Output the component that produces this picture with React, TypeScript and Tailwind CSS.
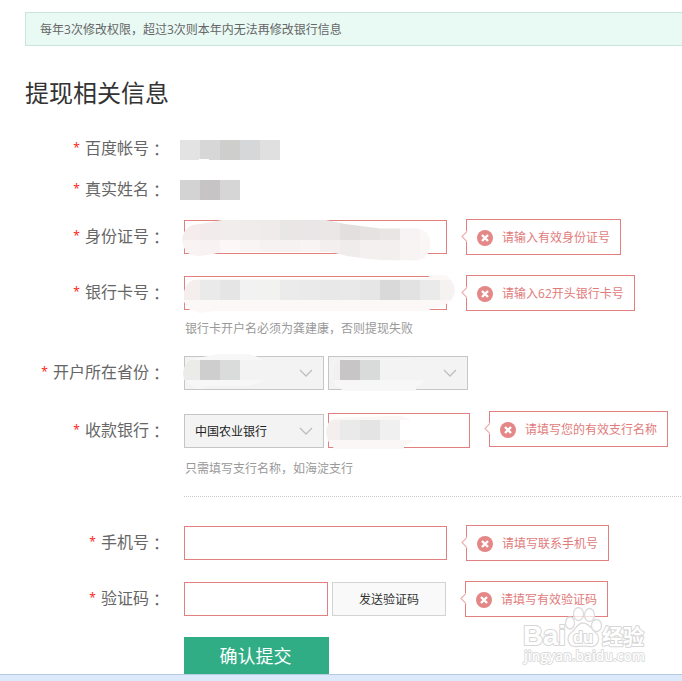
import type { ReactNode } from 'react';

type Cell = [x: number, y: number, w: number, h: number, fill: string];

const BOX = 'relative h-[34px] border box-border shrink-0';

function Cells({ cells }: { cells: Cell[] }) {
  return (
    <>
      {cells.map(([x, y, w, h, fill]) => (
        <rect key={`${x}-${y}`} x={x} y={y} width={w} height={h} fill={fill} />
      ))}
    </>
  );
}

function row(x: number, y: number, h: number, fills: string[]): Cell[] {
  return fills.map((fill, i) => [x + i * 20, y, 20, h, fill]);
}

function Label({ children }: { children: string }) {
  return (
    <div className="flex h-[32px] w-[165px] shrink-0 items-center justify-end text-[16px] leading-[32px] text-[#666]">
      <span className="mr-[5px] pt-[2px] font-['Noto_Sans'] text-[12px] text-[#ff2a20]">*</span>
      <span>{children}</span>
      <span className="w-[16px] pt-[4px] text-center font-['Noto_Sans_CJK_TC']" lang="zh-TW">：</span>
    </div>
  );
}

function Row({ label, className, children }: { label: string; className: string; children: ReactNode }) {
  return (
    <div className={`flex h-[36px] ${className}`}>
      <Label>{label}</Label>
      {children}
    </div>
  );
}

function Tip({ children, className }: { children: ReactNode; className: string }) {
  return (
    <div className={`relative flex h-[36px] shrink-0 items-center border border-[#e27f7f] pl-[10px] pr-[10px] text-[12px] text-[#e17b7b] ${className}`}>
      <svg className="absolute -left-[6px] top-[9px]" width="7" height="14" viewBox="0 0 7 14">
        <path d="M5 2h1v11h-1z" fill="#fff" />
        <path d="M6 2.3 1 7.5l5 5.2" fill="none" stroke="#eeb0b0" strokeWidth="1.2" />
      </svg>
      <svg className="mr-[9px] mt-[2px]" width="16" height="16" viewBox="0 0 16 16">
        <circle cx="8" cy="8" r="8" fill="#e48787" />
        <path d="m5 5 6 6m0-6-6 6" stroke="#fff" strokeWidth="2.4" />
      </svg>
      <span className="whitespace-nowrap">{children}</span>
    </div>
  );
}

function Chevron() {
  return (
    <svg className="absolute right-[9px] top-[11px]" width="16" height="10" viewBox="0 0 16 10">
      <path d="m2 2 6 6 6-6" fill="none" stroke="#bdbdbd" strokeWidth="1.3" />
    </svg>
  );
}

export default function App() {
  return (
    <div className="relative flex h-[681px] w-[682px] flex-col overflow-hidden bg-white font-['Noto_Sans_CJK_SC',sans-serif]">
      <div className="ml-[25px] mt-[12px] flex h-[34px] shrink-0 items-center border border-r-0 border-[#c9e6dc] bg-[#e9faf5] pl-[14px] text-[12px] text-[#666]">
        <span>
          每年<span className="font-['Open_Sans']">3</span>次修改权限，超过<span className="font-['Open_Sans']">3</span>次则本年内无法再修改银行信息
        </span>
      </div>
      <h1 className="ml-[25px] mt-[28px] h-[37px] text-[24px] font-normal leading-[36px] text-[#333]">提现相关信息</h1>

      <Row label="百度帐号" className="mt-[20px]">
        <svg className="ml-[15px] mt-[9px]" width="100" height="20">
          <Cells cells={row(0, 0, 20, ['#e3e3e3', '#d7d7d7', '#cececc', '#d6d7d9', '#e0e0e1'])} />
          <path d="M19 20v-1h10v1z" fill="#fff" />
        </svg>
      </Row>
      <Row label="真实姓名" className="mt-[5px]">
        <svg className="ml-[15px] mt-[8px]" width="60" height="20">
          <Cells cells={row(0, 0, 20, ['#d3d3d3', '#c6c4c4', '#d6d6d6'])} />
        </svg>
      </Row>

      <Row label="身份证号" className="mt-[11px]">
        <div className={`${BOX} ml-[19px] mt-px w-[263px] border-[#e27f7f]`}>
          <svg className="absolute -left-[5px] -top-[6px]" width="280" height="50" viewBox="180 215 280 50">
            <clipPath id="smudge-id">
              <path d="M182 240Q183 229 192 225L206 223 222 220H326L345 224 361 226 380 228.500H418Q429 230 430.500 242 430 258 418 260.500L380 260 361 258 347 256 331 252H222L213 254 200 256Q184 257 182 240Z" />
            </clipPath>
            <g clipPath="url(#smudge-id)">
              <Cells cells={row(180, 220, 20, ['#f5eded', '#f1eceb', '#f0edec', '#f0eceb', '#efebea', '#e9e6e6', '#eae6e8', '#ebe7e6', '#e2dfde', '#e5e2e1', '#e9e5e4', '#f7f2f4', '#fbf7f6'])} />
              <Cells cells={row(180, 240, 22, ['#f9f3f3', '#f8f3f2', '#fdf8f7', '#f9f5f4', '#f6f2f2', '#f6f2f1', '#f9f4f4', '#f3efee', '#f0eceb', '#f4f0ef', '#f3efee', '#f9f4f4', '#fbf6f6'])} />
            </g>
          </svg>
        </div>
        <Tip className="ml-[19px]">请输入有效身份证号</Tip>
      </Row>

      <Row label="银行卡号" className="mt-[20px]">
        <div className={`${BOX} ml-[19px] mt-px w-[263px] border-[#e27f7f]`}>
          <svg className="absolute -left-[5px] -top-[6px]" width="280" height="50" viewBox="180 271 280 50">
            <clipPath id="smudge-card">
              <path d="M184 293Q186 280 198 279H424L432 275H445Q453 279 455 291 453 303 441 306L425 311H215L200 313 190 310 184 302Z" />
            </clipPath>
            <g clipPath="url(#smudge-card)">
              <rect x="180" y="271" width="280" height="50" fill="#fcf8f7" />
              <Cells cells={row(180, 280, 20, ['#f4eeee', '#eaeaea', '#e5e5e5', '#f2f2f2', '#f2f3f1', '#ebebeb', '#eaeaea', '#e8e8e8', '#e9e9e9', '#e6e6e6', '#d9d9d9', '#e3e2e2', '#eaeaea', '#f6f2f2'])} />
            </g>
          </svg>
        </div>
        <Tip className="ml-[19px]">
          请输入<span className="font-['Open_Sans']">62</span>开头银行卡号
        </Tip>
      </Row>
      <p className="ml-[185px] mt-[7px] h-[20px] text-[12px] leading-[20px] text-[#999]">银行卡开户名必须为龚建康，否则提现失败</p>

      <Row label="开户所在省份" className="mt-[17px]">
        <div className={`${BOX} ml-[19px] mt-px w-[140px] border-[#c6c6c6] bg-[#f3f3f3]`}>
          <svg className="absolute -left-[5px] -top-[4px]" width="90" height="38" viewBox="180 353 90 38">
            <path d="M183 374Q184 361 198 358L218 354H248Q260 357 263 360V380Q256 386 242 386H204V389H196V387Q186 384 183 374Z" fill="#f7f7f7" />
            <path d="M183 374Q184 363 190 360H200V380H184Z" fill="#ebebea" />
            <Cells cells={[[200, 360, 20, 20, '#cecece'], [220, 360, 20, 20, '#dadcdb'], [240, 360, 24, 20, '#f3f3f3']]} />
          </svg>
          <Chevron />
        </div>
        <div className={`${BOX} ml-[4px] mt-px w-[140px] border-[#c6c6c6] bg-[#f3f3f3]`}>
          <svg className="absolute left-0 top-0" width="110" height="34" viewBox="329 357 110 34">
            <path d="M332 374Q334 361 344 359H410Q414 361 412 380H425Q421 385 416 387V391H345Q332 386 332 374Z" fill="#f7f7f7" />
            <path d="M332 374Q334 362 340 360V380H333Z" fill="#f1f1f0" />
            <Cells cells={[[340, 360, 20, 20, '#c8c5c6'], [360, 360, 20, 20, '#d8dbda'], [380, 360, 34, 20, '#f3f3f3']]} />
          </svg>
          <Chevron />
        </div>
      </Row>

      <Row label="收款银行" className="mt-[22px]">
        <div className={`${BOX} ml-[19px] mt-px w-[140px] border-[#c6c6c6] bg-[#f3f3f3] pl-[10px] text-[12px] leading-[31px] text-[#222]`}>
          中国农业银行
          <Chevron />
        </div>
        <div className="relative ml-[4px] h-[35px] w-[142px] shrink-0 border border-[#e27f7f]">
          <svg className="absolute -left-[4px] top-0" width="95" height="36" viewBox="325 414 95 36">
            <path d="M326 433Q326 421 335 418L390 416H402L411 420H400V440H413Q408 445 404 446V449H335Q327 443 326 433Z" fill="#fbf7f6" />
            <path d="M326 433Q327 422 334 420H340V440H328Z" fill="#f4eeee" />
            <Cells cells={row(340, 420, 20, ['#eaeaea', '#e4e4e4', '#f0f0f0'])} />
          </svg>
        </div>
        <Tip className="-mt-[2px] ml-[19px]">请填写您的有效支行名称</Tip>
      </Row>
      <p className="ml-[185px] mt-[9px] h-[20px] text-[12px] leading-[20px] text-[#999]">只需填写支行名称，如海淀支行</p>
      <div className="ml-[184px] mt-[18px] h-px shrink-0 bg-[repeating-linear-gradient(90deg,#ccc_0_1px,transparent_1px_2px)]" />

      <Row label="手机号" className="mt-[28px]">
        <div className={`${BOX} ml-[19px] mt-px w-[263px] border-[#e27f7f]`} />
        <Tip className="ml-[19px]">请填写联系手机号</Tip>
      </Row>
      <Row label="验证码" className="mt-[20px]">
        <div className={`${BOX} ml-[19px] mt-px w-[144px] border-[#e27f7f]`} />
        <button className={`${BOX} ml-[4px] mt-px w-[114px] border-[#d3d3d3] bg-[#f9f9f9] text-[12px] text-[#333]`}>发送验证码</button>
        <Tip className="ml-[19px]">请填写有效验证码</Tip>
      </Row>
      <button className="ml-[184px] mt-[20px] h-[37px] w-[145px] shrink-0 bg-[#30ad85] pr-[2px] text-[18px] leading-[37px] text-white">确认提交</button>
      <div className="h-[7px] shrink-0 border-t border-[#b5cbe3] bg-[#dbe9fa]" />

      <svg className="absolute left-[518px] top-[602px]" width="134" height="68" viewBox="518 602 134 68">
        <g fill="#fff" fillOpacity="0.75" stroke="#dcdcdc" strokeWidth="1.3">
          <ellipse cx="570" cy="623" rx="4.500" ry="6" />
          <ellipse cx="578.500" cy="614" rx="5" ry="6.500" />
          <ellipse cx="589.500" cy="615" rx="5" ry="6.500" />
          <ellipse cx="596.500" cy="625.500" rx="5" ry="6" />
          <path d="M583 623C577 623 576 629 572 632 565 637 568 647 576 646.500 581 646 585 646 590 646.500 598 647 602 638 595 632 591 628 589 623 583 623Z" />
        </g>
        <g fill="#fff" stroke="#d6d6d6" strokeWidth="2" strokeLinejoin="round" style={{ paintOrder: 'stroke' }}>
          <text x="523" y="644.500" fontFamily="Liberation Sans" fontWeight="700" fontSize="27" textLength="43" lengthAdjust="spacingAndGlyphs">Bai</text>
          <text x="573" y="643" fontFamily="Liberation Sans" fontWeight="700" fontSize="17" textLength="20" lengthAdjust="spacingAndGlyphs">du</text>
          <text x="602" y="643.500" fontFamily="Noto Sans CJK SC" fontWeight="700" fontSize="21">经验</text>
          <text x="524" y="661" fontFamily="Open Sans" fontWeight="600" fontSize="14" strokeWidth="1.6" textLength="121" lengthAdjust="spacingAndGlyphs">jingyan.baidu.com</text>
        </g>
      </svg>
    </div>
  );
}
